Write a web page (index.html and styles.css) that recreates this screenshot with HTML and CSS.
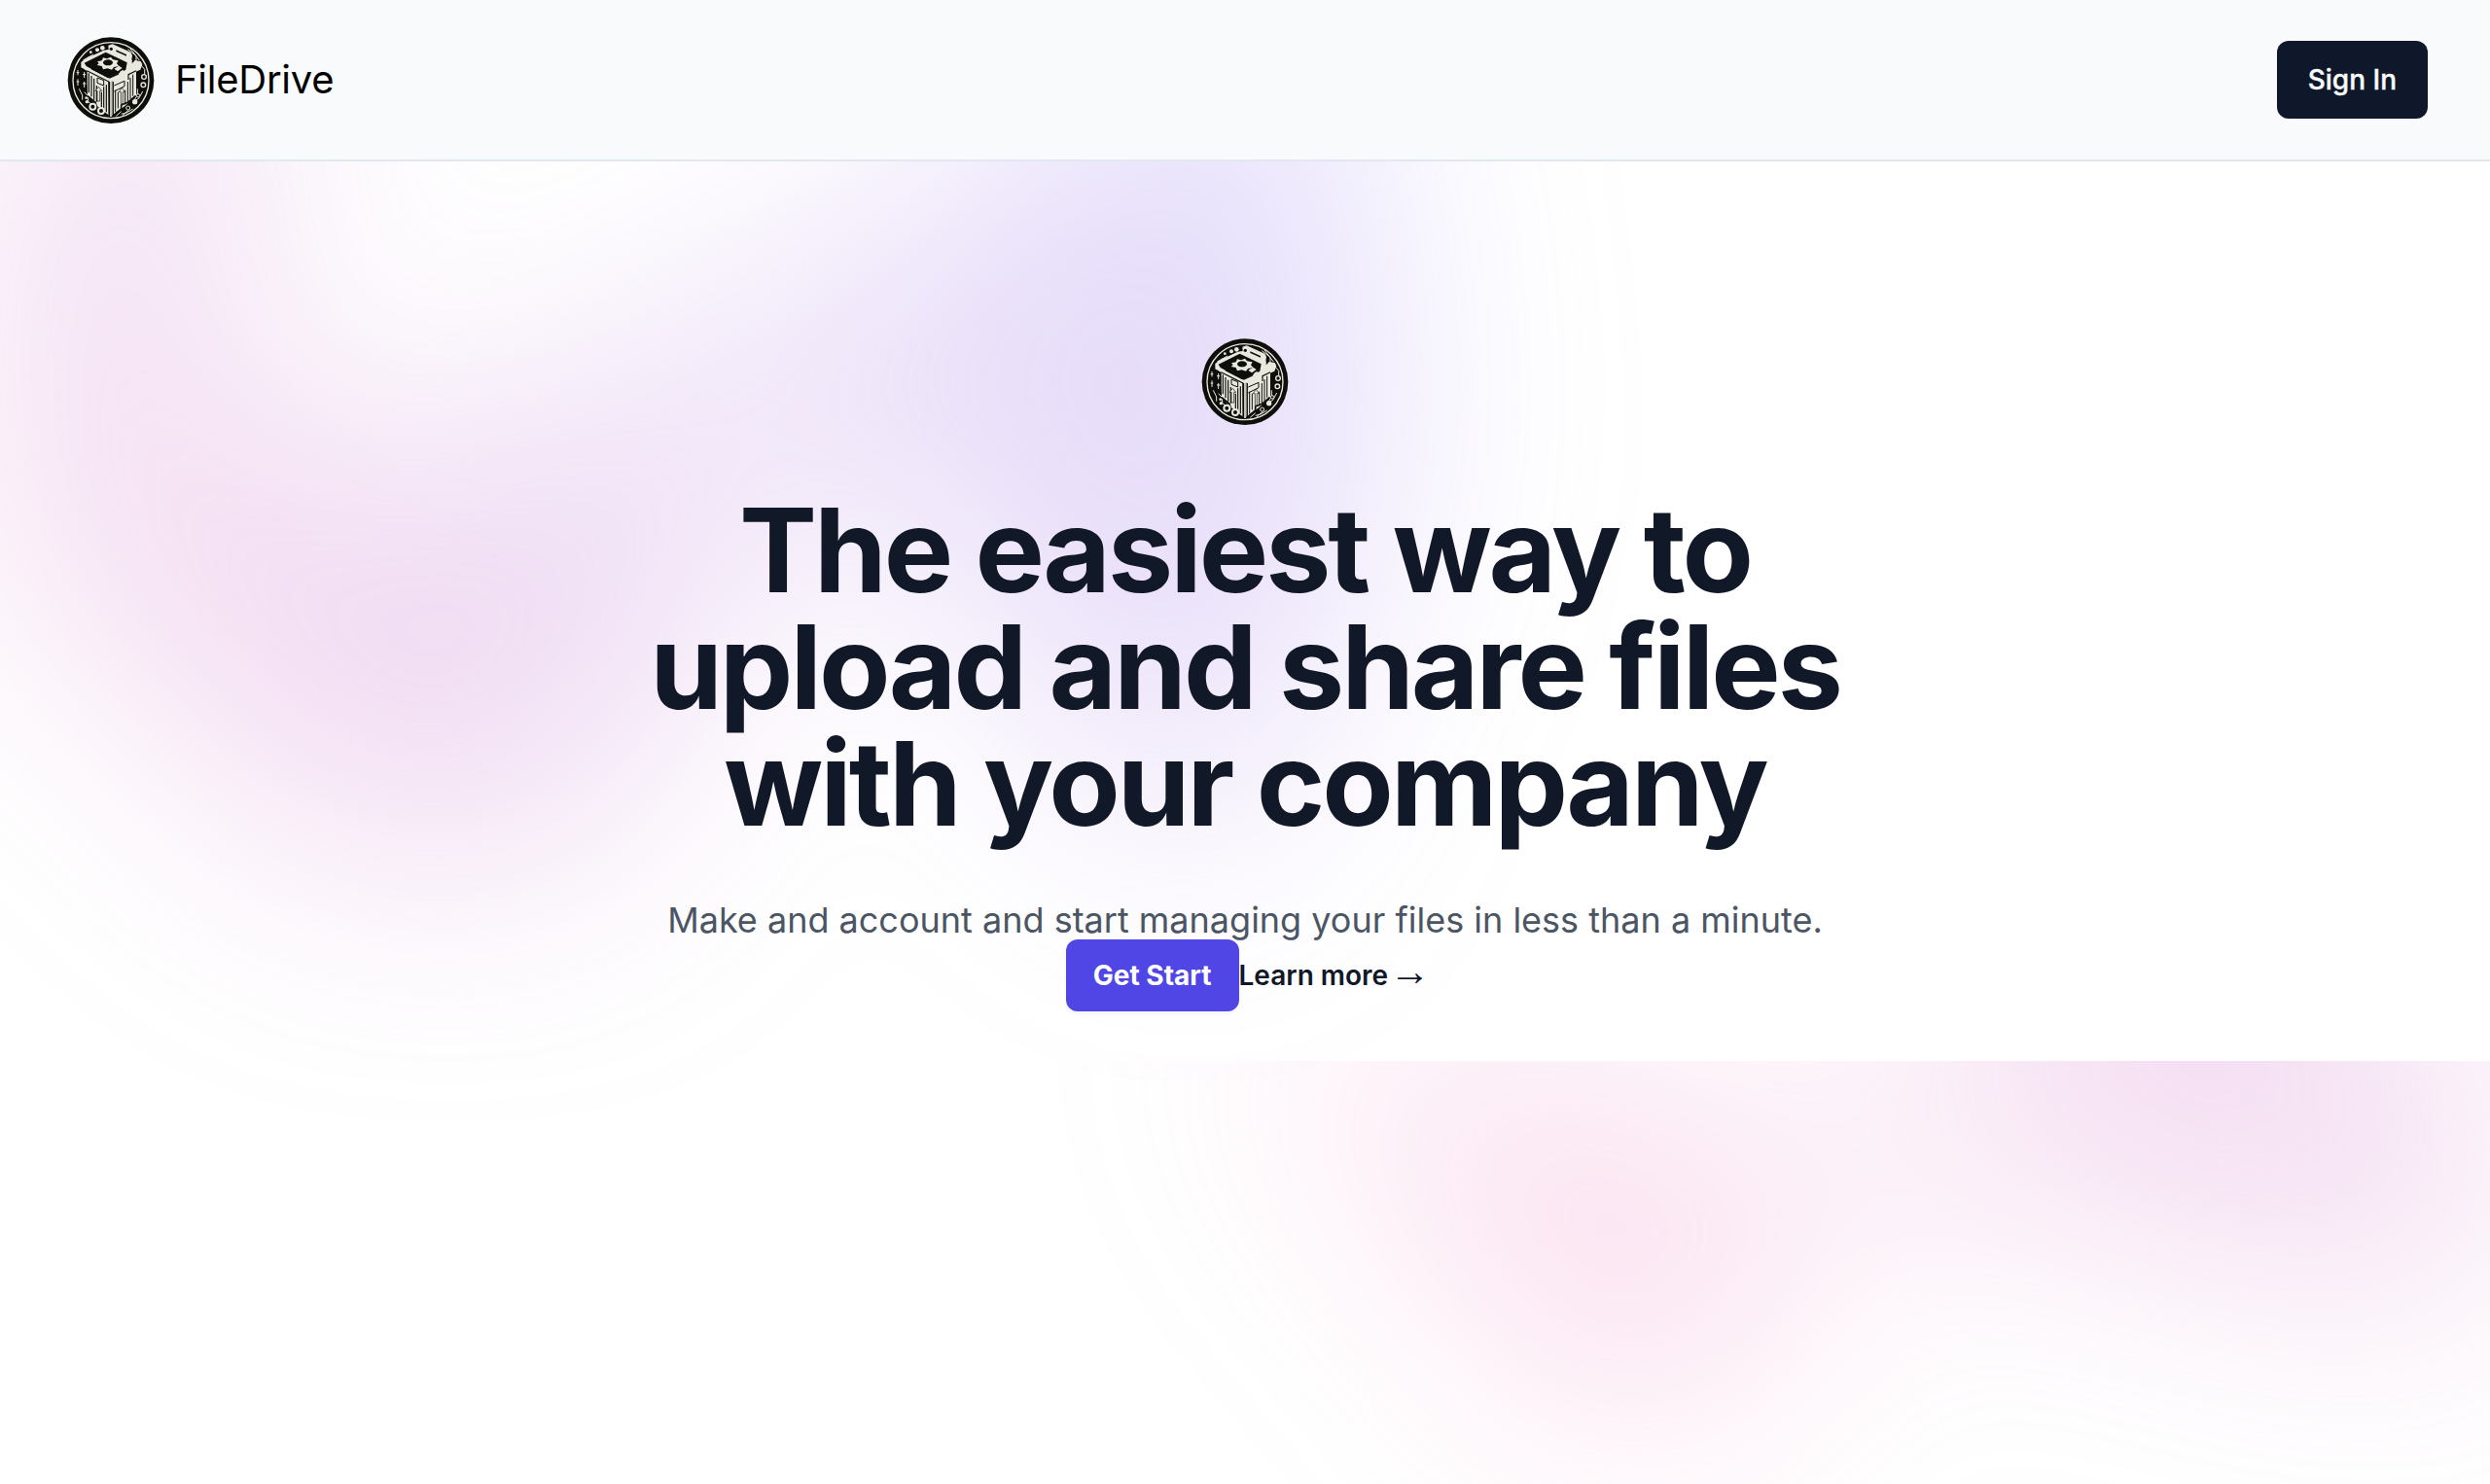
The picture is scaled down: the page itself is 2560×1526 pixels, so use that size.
FILE: index.html
```html
<!DOCTYPE html>
<html lang="en">
<head>
<meta charset="utf-8">
<title>FileDrive</title>
<link rel="stylesheet" href="styles.css">
</head>
<body>
<svg class="defs" aria-hidden="true">
  <symbol id="logo" viewBox="30 22 300 300">
    <circle cx="180" cy="174" r="133" fill="#0e0f0b"/>
    <circle cx="180" cy="174" r="117" fill="none" stroke="#e9e8df" stroke-width="4"/>
    <g fill="none" stroke="#e9e8df" stroke-width="3">
      <path d="M98 210l12 12v18l14 10M94 112l32-18M108 104l22-6 20-8M232 78l26 20v26M240 76l28 36"/>
      <path d="M78 142v16M78 170v20M98 148v18M98 178v18M74 150h8M74 178h8M93 156h10M93 184h10M82 200l10 20v14"/>
      <path d="M272 126l12 14v14M262 200v20l-12 18M278 208l-12 22-14 8M248 262l-20 12-16 4M216 282l20-18M196 284l16-14"/>
    </g>
    <g fill="#e9e8df">
      <circle cx="138" cy="80" r="6"/><circle cx="154" cy="74" r="7"/><circle cx="118" cy="87" r="4"/>
      <circle cx="104" cy="228" r="4"/><circle cx="106" cy="240" r="5"/>
      <path d="M88 118l12-10 58-27 14-2 62 30 38 6 5 10-6 16-32 14-62 24-76-36-13-9z"/>
      <path d="M106 134l66 30 2 118-36-28-30-34z"/>
      <path d="M258 134l-74 32v116l40-30 34-32z"/>
      <path d="M172 66l13-4 56 25 5 9-3 24-9 4-60-30z"/>
    </g>
    <g fill="#0e0f0b">
      <path d="M98 120l66-33 66 32-4 22-44 23-12 2-66-36z"/>
      <circle cx="181" cy="77" r="5"/>
      <path d="M196 80l32 14v5l-32-14zM246 96l5 2 2 16-8 8z"/>
    </g>
    <g fill="#e9e8df">
      <path d="M138 116l14-3 4-9 12 3 12-5 6 8 17 3-5 9 7 8-16 3-6 8-13-4-14 3-4-10-15-3 6-5z"/>
      <path d="M190 138l15-9 10 7-14 10zM207 148l10-7 3 8-10 8z"/>
    </g>
    <ellipse cx="171" cy="119" rx="15" ry="9" fill="#0e0f0b"/>
    <g fill="none" stroke="#0e0f0b" stroke-width="3">
      <path d="M92 138l12 8v26M106 144l68 34v104M187 178v104M258 144l-24 12v16M112 152v60M120 160v64M128 168v66M136 190v50M151 210v56M158 194v72M166 188v84" stroke-width="3.500"/>
      <path d="M138 166l20 8v16l-20-8zM190 190l32-14v16l-32 16M194 204v68M202 210v50M224 204v44M232 178v62M240 166v66M248 156v66"/>
      <path d="M120 138l56 28 28-12" stroke-width="4"/>
      <path d="M108 222l24 20 4 14 36 28M256 222l-24 20-20 8v12l-24 20" stroke-width="5"/>
    </g>
    <path d="M142 194l-10 12h6v32h8v-32h6zM214 196l-9 14h6v36h6v-36h6z" fill="#e9e8df" stroke="#0e0f0b" stroke-width="2"/>
    <path d="M180 170v116" stroke="#e9e8df" stroke-width="5"/>
    <g fill="#0e0f0b" stroke="#e9e8df" stroke-width="4">
      <circle cx="282" cy="163" r="7"/>
      <circle cx="280" cy="188" r="7"/>
      <circle cx="264" cy="221" r="5" stroke-width="3"/>
      <circle cx="233" cy="259" r="6" stroke-width="3"/>
      <circle cx="124" cy="255" r="9" stroke-width="6"/>
      <circle cx="150" cy="268" r="9" stroke-width="6"/>
      <circle cx="254" cy="240" r="6" fill="#e9e8df"/>
    </g>
  </symbol>
</svg>
<header class="header">
  <div class="brand">
    <svg class="logo" role="img" aria-label="FileDrive logo"><use href="#logo"/></svg>
    <span>FileDrive</span>
  </div>
  <button class="sign-in">Sign In</button>
</header>
<main class="hero">
  <div class="glow glow-top" aria-hidden="true"><div class="glow-shape"></div></div>
  <div class="content">
    <svg class="logo" role="img" aria-label="FileDrive logo"><use href="#logo"/></svg>
    <h1>The easiest way to upload and share files with your company</h1>
    <p>Make and account and start managing your files in less than a minute.</p>
    <div class="actions">
      <a class="start">Get Start</a>
      <a class="learn">Learn more <span class="arrow">→</span></a>
    </div>
  </div>
</main>
<div class="lower" aria-hidden="true">
  <div class="glow glow-bottom"><div class="glow-shape"></div></div>
</div>
</body>
</html>
```
FILE: styles.css
```css
* { box-sizing: border-box; }
body {
  margin: 0;
  height: 1526px;
  display: flex;
  flex-direction: column;
  overflow: hidden;
  background: #fff;
  color: #000;
  font-family: Inter, "Liberation Sans", sans-serif;
}
.defs { position: absolute; width: 0; height: 0; }
.header {
  position: relative;
  z-index: 10;
  flex: none;
  display: flex;
  align-items: center;
  justify-content: space-between;
  padding: 32px 64px;
  background: #f9fafc;
  border-bottom: 2px solid #e2e8f0;
}
.brand { display: flex; align-items: center; gap: 16px; font-size: 40px; line-height: 56px; letter-spacing: -0.25px; }
.logo { display: block; width: 100px; height: 100px; }
.sign-in {
  height: 80px;
  padding: 0 32px;
  border: 0;
  border-radius: 12px;
  background: #0f172a;
  color: #f8fafc;
  font: 500 28px/40px Inter, sans-serif;
  -webkit-text-stroke: 0.4px #f8fafc;
}
.hero { position: relative; flex: none; height: 925px; padding: 176px 64px 64px; }
.content {
  position: relative;
  z-index: 1;
  width: 1344px;
  margin: 0 auto;
  display: flex;
  flex-direction: column;
  align-items: center;
  text-align: center;
}
h1 {
  margin: 64px 0 0;
  font-size: 120px;
  line-height: 120px;
  font-weight: 700;
  letter-spacing: -0.025em;
  color: #111827;
}
p { margin: 48px 0 0; font-size: 36px; line-height: 64px; color: #4b5563; white-space: nowrap; }
.actions {
  display: flex;
  align-items: center;
  height: 50px;
  font-size: 28px;
  font-weight: 600;
  color: #111827;
  white-space: nowrap;
}
.start {
  padding: 20px 28px;
  line-height: 34px;
  border-radius: 12px;
  background: #4f46e5;
  color: #fff;
  font-weight: 700;
  box-shadow: 0 2px 4px rgb(0 0 0 / 5%);
}
.learn { line-height: 34px; }
.arrow { margin: 0 -6px; font-family: "Liberation Sans", sans-serif; font-size: 42px; line-height: 0; font-weight: 400; }
.glow { position: absolute; left: 0; right: 0; overflow: hidden; filter: blur(128px); }
.glow-top { top: -640px; }
.glow-shape {
  position: relative;
  width: 2310px;
  height: 1356px;
  transform: translateX(-50%);
  background: linear-gradient(to top right, #ff80b5, #9089fc);
  opacity: .29;
  clip-path: polygon(74.1% 44.1%, 100% 61.6%, 97.5% 26.9%, 85.5% 0.1%, 80.7% 2%, 72.5% 32.5%, 60.2% 62.4%, 52.4% 68.1%, 47.5% 58.3%, 45.2% 34.5%, 27.5% 76.7%, 0.1% 64.9%, 17.9% 100%, 27.6% 76.8%, 76.1% 97.7%, 74.1% 44.1%);
}
.glow-top .glow-shape { left: calc(50% - 960px); transform: translateX(-50%) rotate(30deg); }
.lower { position: relative; flex: 1; overflow: hidden; }
.glow-bottom { top: -940px; }
.glow-bottom .glow-shape { left: calc(50% + 1152px); }
```
